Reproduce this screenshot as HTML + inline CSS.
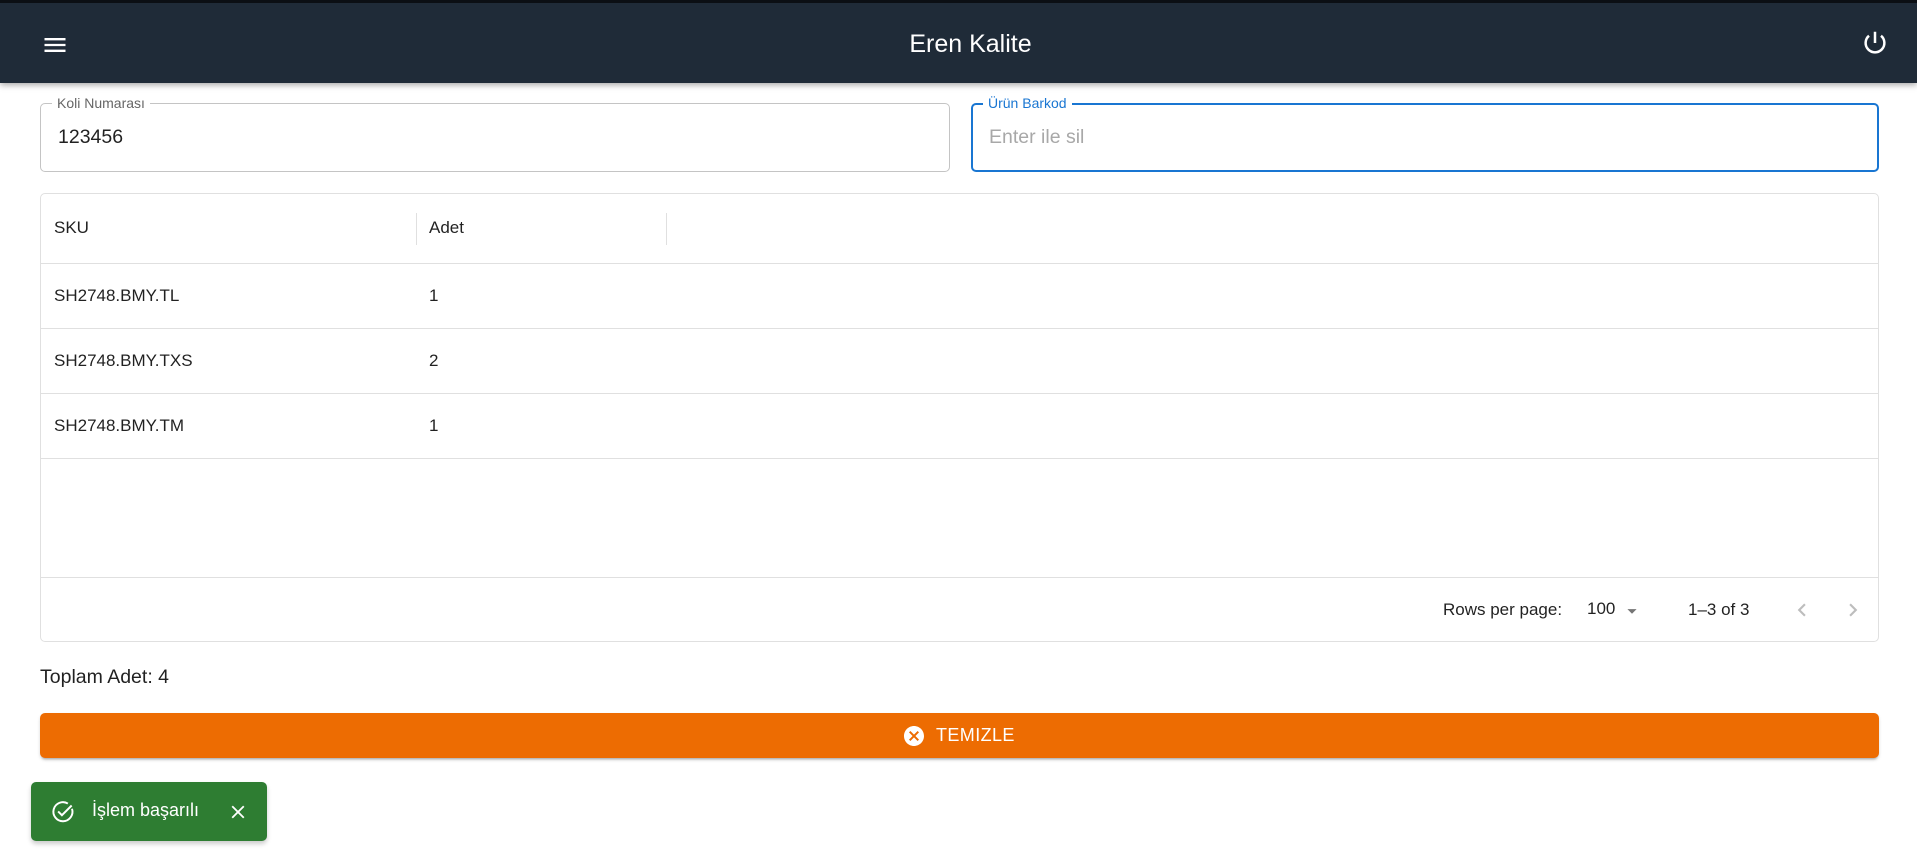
<!DOCTYPE html>
<html><head><meta charset="utf-8">
<style>
*{box-sizing:border-box;margin:0;padding:0}
body{width:1917px;height:866px;background:#fff;font-family:"Liberation Sans",Arial,sans-serif;position:relative;overflow:hidden;color:rgba(0,0,0,.87)}
.bar{position:absolute;left:0;top:0;width:1917px;height:83px;background:#1f2b38;border-top:3px solid #0b0f14;box-shadow:0 2px 6px rgba(0,0,0,.35)}
.title{position:absolute;left:24px;right:0;top:27px;text-align:center;color:#fff;font-size:25px}
.field{position:absolute;top:103px;height:69px;border:1px solid #c4c4c4;border-radius:5px}
.field .lab{position:absolute;top:-9px;left:11px;background:#fff;padding:0 5px;font-size:14px;color:#666}
.field .val{position:absolute;left:17px;top:22px;font-size:19.5px}
.focus{border:2px solid #1976d2}
.focus .lab{color:#1976d2;top:-10px;left:10px}
.focus .val{color:#a8a8a8;left:16px;top:21px}
.table{position:absolute;left:40px;top:193px;width:1839px;height:449px;border:1px solid #e0e0e0;border-radius:5px}
.hdr,.row{position:absolute;left:0;right:0;border-bottom:1px solid #e0e0e0;font-size:17px}
.c1{position:absolute;left:13px}
.c2{position:absolute;left:388px}
.sep{position:absolute;top:19px;width:1px;height:32px;background:#e0e0e0}
.foot{position:absolute;left:0;right:0;top:383px;height:65px;border-top:1px solid #e0e0e0;font-size:17px}
.btn{position:absolute;left:40px;top:713px;width:1839px;height:45px;background:#ed6c02;border-radius:5px;box-shadow:0 3px 2px -2px rgba(0,0,0,.25),0 2px 3px rgba(0,0,0,.15);color:#fff;font-size:18px;letter-spacing:.4px}
.snack{position:absolute;left:31px;top:782px;width:236px;height:59px;background:#2e7d32;border-radius:5px;color:#fff;font-size:18px;box-shadow:0 3px 5px rgba(0,0,0,.2)}
</style></head><body>
<div class="bar">
  <svg style="position:absolute;left:41px;top:28px" width="28" height="28" viewBox="0 0 24 24"><path d="M3 18h18v-2H3v2zm0-5h18v-2H3v2zm0-7v2h18V6H3z" fill="#fff"/></svg>
  <div class="title">Eren Kalite</div>
  <svg style="position:absolute;left:1860px;top:25px" width="30" height="30" viewBox="0 0 24 24"><path d="M12 3v9" stroke="#fff" stroke-width="2" fill="none"/><path d="M7.2 6.2A7.5 7.5 0 1 0 16.8 6.2" stroke="#fff" stroke-width="2" fill="none"/></svg>
</div>

<div class="field" style="left:40px;width:910px"><span class="lab">Koli Numarası</span><span class="val">123456</span></div>
<div class="field focus" style="left:971px;width:908px"><span class="lab">Ürün Barkod</span><span class="val">Enter ile sil</span></div>

<div class="table">
  <div class="hdr" style="top:0;height:70px"><span class="c1" style="top:24px">SKU</span><div class="sep" style="left:375px"></div><span class="c2" style="top:24px">Adet</span><div class="sep" style="left:625px"></div></div>
  <div class="row" style="top:70px;height:65px"><span class="c1" style="top:22px">SH2748.BMY.TL</span><span class="c2" style="top:22px">1</span></div>
  <div class="row" style="top:135px;height:65px"><span class="c1" style="top:22px">SH2748.BMY.TXS</span><span class="c2" style="top:22px">2</span></div>
  <div class="row" style="top:200px;height:65px"><span class="c1" style="top:22px">SH2748.BMY.TM</span><span class="c2" style="top:22px">1</span></div>
  <div class="foot">
    <span style="position:absolute;left:1402px;top:22px">Rows per page:</span>
    <span style="position:absolute;left:1546px;top:21px">100</span>
    <svg style="position:absolute;left:1580px;top:22px" width="22" height="22" viewBox="0 0 24 24"><path d="M7 10l5 5 5-5z" fill="#757575"/></svg>
    <span style="position:absolute;left:1647px;top:22px">1–3 of 3</span>
    <svg style="position:absolute;left:1748px;top:19px" width="26" height="26" viewBox="0 0 24 24"><path d="M15.4 7.4L14 6l-6 6 6 6 1.4-1.4L10.8 12z" fill="#bdbdbd"/></svg>
    <svg style="position:absolute;left:1799px;top:19px" width="26" height="26" viewBox="0 0 24 24"><path d="M10 6L8.6 7.4 13.2 12l-4.6 4.6L10 18l6-6z" fill="#bdbdbd"/></svg>
  </div>
</div>

<div style="position:absolute;left:40px;top:666px;font-size:19.5px">Toplam Adet: 4</div>

<div class="btn">
  <svg style="position:absolute;left:862px;top:11px" width="24" height="24" viewBox="0 0 24 24"><path d="M12 2C6.47 2 2 6.47 2 12s4.47 10 10 10 10-4.47 10-10S17.53 2 12 2zm5 13.59L15.59 17 12 13.41 8.41 17 7 15.59 10.59 12 7 8.41 8.41 7 12 10.59 15.59 7 17 8.41 13.41 12 17 15.59z" fill="#fff"/></svg>
  <span style="position:absolute;left:896px;top:12px">TEMIZLE</span>
</div>

<div class="snack">
  <svg style="position:absolute;left:19px;top:17px" width="26" height="26" viewBox="0 0 24 24"><path d="M20.3 9A8.8 8.8 0 1 1 16.5 4.2" stroke="#fff" stroke-width="1.8" fill="none"/><path d="M7.5 11.5l3.5 3.5 9-9" stroke="#fff" stroke-width="1.8" fill="none"/></svg>
  <span style="position:absolute;left:61px;top:18px">İşlem başarılı</span>
  <svg style="position:absolute;left:196px;top:19px" width="22" height="22" viewBox="0 0 24 24"><path d="M19 6.41L17.59 5 12 10.59 6.41 5 5 6.41 10.59 12 5 17.59 6.41 19 12 13.41 17.59 19 19 17.59 13.41 12z" fill="#fff"/></svg>
</div>
</body></html>
